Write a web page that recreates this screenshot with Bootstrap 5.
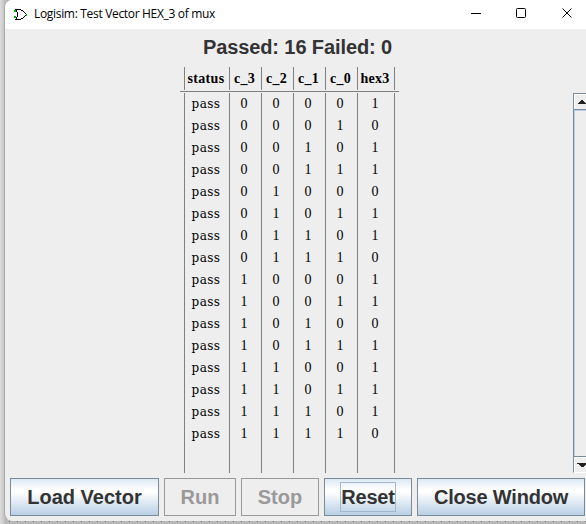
<!DOCTYPE html>
<html lang="en">
<head>
<meta charset="utf-8">
<meta name="viewport" content="width=device-width, initial-scale=1">
<title>Logisim: Test Vector HEX_3 of mux</title>
<link href="https://cdn.jsdelivr.net/npm/bootstrap@5.3.0/dist/css/bootstrap.min.css" rel="stylesheet">
<style>
body{width:586px;height:524px;background:linear-gradient(90deg,#dcdcdc,#c6c6c6 4px,#b8b8b8 5px);padding-left:4px;font-family:"Liberation Sans",Arial,sans-serif;color:#333}
.app-window{height:521px;background:#eee;border-left:1px solid #a9a9a9;border-radius:8px 0 0 8px}
.title-bar{height:29px;background:#fff;padding-left:8px;color:#000}
.title-text{font:12px/18px "Open Sans",sans-serif;letter-spacing:-.32px;margin-left:6px;margin-top:-1px;white-space:nowrap}
.win-icons{width:124px;height:29px}
.result{font-size:20px;letter-spacing:-.1px;line-height:36px;height:38px;padding-left:4px}
.view{height:406px}
.grid-wrap{width:219px;margin-left:175px;font-family:"Liberation Serif",serif;color:#000}
.heads{height:23px;padding-left:4px}
.rule{height:1px;margin:1px 0;background:#808080}
.cols{height:380px;padding-left:4px}
.cell-col{width:32px;border-left:1px solid #808080;text-align:center;font-size:14px;line-height:22px;padding-right:3px}
.cell-col.c-status{width:45px}
.cell-col.c-hex{width:37px}
.cell-col.c-end{width:1px;padding:0}
.heads .cell-col{font-weight:700;line-height:23px;letter-spacing:.3px;white-space:nowrap;padding-right:2px}
.heads .c-end{padding:0}
.cols .c-hex{padding-right:2px}
.cols .c-status{letter-spacing:.4px;font-family:"DejaVu Serif",serif;font-size:12px;padding-right:2px}
.scroll-track{width:13px;height:380px;margin-top:26px;border-left:1px solid #7a8a99;border-top:1px solid #7a8a99;border-bottom:1px solid #fff;background:#eee;overflow:hidden}
.track-end{height:15px;border-left:1px solid #fff;border-top:1px solid #fff}
.track-mid{border-left:1px solid #b8cfe5;border-top:1px solid #b8cfe5}
.line-top{border-top:1px solid #7a8a99}
.actions{height:48px;padding:5px 0 0 5px;gap:5px}
.swing-btn{height:38px;border:1px solid #7a8a99;border-radius:0;padding:0;font-size:20px;font-weight:700;line-height:34px;color:#333;background:linear-gradient(#dde8f3,#fff 30%,#fff 36%,#b8cfe5);white-space:nowrap;flex:none}
.swing-btn:disabled{background:#eee;border-color:#999;color:#999;opacity:1}
.b-load{width:149px}.b-run{width:72px}.b-stop{width:78px}.b-reset{width:88px;letter-spacing:-.2px}.b-close{width:168px;letter-spacing:-.2px}
.focus-box{display:block;width:56px;height:30px;line-height:28px;border:1px solid #a3b8cc;margin:0 auto}
.desk{height:3px;background:repeating-linear-gradient(90deg,#666 0 1px,transparent 1px 8px) 3px 0/100% 1px no-repeat,#b8b8b8;margin-left:2px}
</style>
<script src="https://cdn.jsdelivr.net/npm/bootstrap@5.3.0/dist/js/bootstrap.bundle.min.js"></script>
</head>
<body class="overflow-hidden">
<main class="app-window d-flex flex-column overflow-hidden">
  <header class="title-bar d-flex align-items-center flex-shrink-0">
    <svg width="15" height="14" viewBox="0 0 15 14" shape-rendering="crispEdges" fill="none" aria-hidden="true"><path d="M2 1.5h6M8 2.5h2M10 3.5h1M11 4.5h1M12 5.5h1M13 6.5h1M12 7.5h1M11 8.5h1M10 9.5h1M8 10.5h2M2 11.5h6M3.5 2v2M4.5 4v5M3.5 9v2" stroke="#000"/><path d="M1 3h2M1 9h2M13 7h1" stroke="#00b000" stroke-width="2"/></svg>
    <span class="title-text" id="windowTitle">Logisim: Test Vector HEX_3 of mux</span>
    <svg class="win-icons ms-auto" viewBox="0 0 124 29" fill="none" stroke="#000" aria-hidden="true"><path d="M9 13.500h10"/><rect x="54.500" y="8.500" width="9" height="9" rx="1"/><path d="M100.500 8.500l9 9M109.500 8.500l-9 9"/></svg>
  </header>
  <h1 class="result text-center fw-bold m-0 flex-shrink-0">Passed: 16 Failed: 0</h1>
  <section class="view d-flex flex-shrink-0">
    <div class="grid-wrap">
      <div class="heads d-flex"><div class="cell-col c-status">status</div><div class="cell-col">c_3</div><div class="cell-col">c_2</div><div class="cell-col">c_1</div><div class="cell-col">c_0</div><div class="cell-col c-hex">hex3</div><div class="cell-col c-end"></div></div>
      <div class="rule"></div>
      <div class="cols d-flex" id="vectorCols"></div>
    </div>
    <div class="scroll-track ms-auto d-flex flex-column">
      <div class="track-end"><svg class="d-block" width="12" height="14" shape-rendering="crispEdges" aria-hidden="true"><path d="M6 5h2v1h1v1h1v1h1v1H3V8h1V7h1V6h1z" fill="#222"/></svg></div>
      <div class="line-top"></div>
      <div class="track-mid flex-grow-1"></div>
      <div class="line-top"></div>
      <div class="track-end"><svg class="d-block" width="12" height="14" shape-rendering="crispEdges" aria-hidden="true"><path d="M2 5h10v1h-1v1h-1v1H9v1H6V8H5V7H4V6H2z" fill="#222"/></svg></div>
    </div>
  </section>
  <footer class="actions d-flex flex-shrink-0">
    <button class="btn swing-btn b-load">Load Vector</button>
    <button class="btn swing-btn b-run" disabled>Run</button>
    <button class="btn swing-btn b-stop" disabled>Stop</button>
    <button class="btn swing-btn b-reset"><span class="focus-box">Reset</span></button>
    <button class="btn swing-btn b-close">Close Window</button>
  </footer>
</main>
<div class="desk"></div>
<script>
const hex3 = '1011011011011110';
const cols = [
  ['c-status', () => 'pass'],
  ...[3, 2, 1, 0].map(bit => ['', row => row >> bit & 1]),
  ['c-hex', row => hex3[row]],
];
const body = document.getElementById('vectorCols');
for (const [cls, value] of cols) {
  const col = document.createElement('div');
  col.className = 'cell-col ' + cls;
  for (let row = 0; row < 16; row++) {
    const cell = document.createElement('div');
    cell.textContent = value(row);
    col.append(cell);
  }
  body.append(col);
}
const end = document.createElement('div');
end.className = 'cell-col c-end';
body.append(end);
</script>
</body>
</html>
